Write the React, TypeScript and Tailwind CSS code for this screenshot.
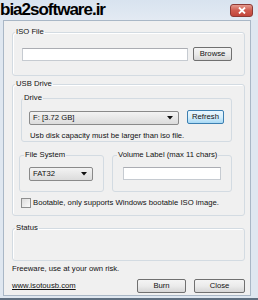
import React from 'react'

const font = { fontFamily: '"Liberation Sans", Arial, sans-serif' }

function WinButton({ label, className = '' }: { label: string; className?: string }) {
  return (
    <button
      type="button"
      className={`h-[14px] rounded-[2px] border border-[#707070] bg-gradient-to-b from-[#f4f4f4] via-[#ebebeb] to-[#d6d6d6] text-[7.7px] leading-[12px] text-[#111] text-center ${className}`}
    >
      {label}
    </button>
  )
}

function Combo({ value, className = '' }: { value: string; className?: string }) {
  return (
    <div
      className={`h-[14px] rounded-[2px] border border-[#8a8a8a] bg-gradient-to-b from-[#f3f3f3] to-[#dcdcdc] flex items-center justify-between pl-[3px] pr-[5px] ${className}`}
    >
      <span className="text-[7.7px] leading-[10px] text-[#111]">{value}</span>
      <svg width="6" height="4" viewBox="0 0 6 4">
        <path d="M0 0 L6 0 L3 3.5 Z" fill="#111" />
      </svg>
    </div>
  )
}

function Group({ label, className = '', children }: { label: string; className?: string; children?: React.ReactNode }) {
  return (
    <fieldset className={`border border-[#d3dbe2] rounded-[3px] shadow-[inset_1px_1px_0_#fff] ${className}`}>
      <legend className="ml-[2px] px-[1px] text-[7.7px] leading-[10px] text-[#111]">{label}</legend>
      {children}
    </fieldset>
  )
}

export default function App() {
  return (
    <div style={font} className="w-[258px] h-[300px] flex flex-col bg-[#dfe7f0] border-b-2 border-[#5f6f80] overflow-hidden">
      {/* title bar */}
      <div className="h-[20px] flex items-start justify-between bg-gradient-to-b from-[#d8e3ef] to-[#e3eaf3]">
        <span className="mt-[0px] text-[17px] leading-[20px] font-bold tracking-[-1px] text-black">bia2software.ir</span>
        <div className="mt-[4px] mr-[5px] w-[23px] h-[13px] rounded-[3px] border border-[#8d3a35] bg-gradient-to-b from-[#e49a8f] via-[#cf5b4f] to-[#c2443a] flex items-center justify-center">
          <svg width="8" height="7" viewBox="0 0 8 7">
            <path d="M1 0.5 L7 6.5 M7 0.5 L1 6.5" stroke="#fff" strokeWidth="1.8" />
          </svg>
        </div>
      </div>

      {/* client area */}
      <div className="ml-[3px] mr-[7px] h-[276px] border border-[#a9b7c6] bg-[#f0f0f0] pl-[8px] pr-[4px] flex flex-col text-[#111]">
        {/* ISO File */}
        <Group label="ISO File" className="mt-[6px] h-[49px] w-[233px]">
          <div className="mt-[10px] ml-[9px] flex items-start">
            <input
              type="text"
              className="mt-[1px] w-[166px] h-[13px] bg-white border border-[#c6cbd1] border-t-[#abadb3] outline-none"
            />
            <WinButton label="Browse" className="ml-[5px] w-[39px]" />
          </div>
        </Group>

        {/* USB Drive */}
        <Group label="USB Drive" className="mt-[3px] h-[137px] w-[233px]">
          <fieldset className="mt-[4px] ml-[8px] w-[211px] h-[49px] border border-[#d3dbe2] rounded-[3px]">
            <legend className="ml-[1px] px-[1px] text-[7.7px] leading-[10px]">Drive</legend>
            <div className="mt-[7px] ml-[7px] flex items-start">
              <Combo value="F: [3.72 GB]" className="mt-[1px] w-[150px] h-[13px]" />
              <button
                type="button"
                className="ml-[8px] w-[37px] h-[14px] rounded-[2px] border border-[#3c7fb1] bg-gradient-to-b from-[#eaf6fd] via-[#d9f0fc] to-[#a7d9f5] text-[7.7px] leading-[12px] text-[#111]"
              >
                Refresh
              </button>
            </div>
            <p className="mt-[6px] ml-[8px] text-[7.7px] leading-[10px]">Usb disk capacity must be larger than iso file.</p>
          </fieldset>

          <div className="mt-[8px] ml-[6px] flex gap-[8px]">
            <fieldset className="w-[85px] h-[42px] border border-[#d3dbe2] rounded-[3px]">
              <legend className="ml-[4px] px-[1px] text-[7.7px] leading-[10px]">File System</legend>
              <Combo value="FAT32" className="mt-[7px] ml-[9px] w-[64px]" />
            </fieldset>
            <fieldset className="w-[120px] h-[42px] border border-[#d3dbe2] rounded-[3px]">
              <legend className="ml-[4px] px-[1px] text-[7.7px] leading-[10px]">Volume Label (max 11 chars)</legend>
              <input
                type="text"
                className="mt-[7px] ml-[10px] w-[98px] h-[13px] bg-white border border-[#c6cbd1] border-t-[#abadb3] outline-none block"
              />
            </fieldset>
          </div>

          <label className="mt-[6px] ml-[8px] flex items-center gap-[2px]">
            <span className="w-[10px] h-[10px] border border-[#8e8f8f] bg-gradient-to-br from-[#dcdcdc] to-[#fbfbfb]" />
            <span className="text-[7.7px] leading-[10px]">Bootable, only supports Windows bootable ISO image.</span>
          </label>
        </Group>

        {/* Status */}
        <Group label="Status" className="mt-[7px] h-[38px] w-[233px]" />

        <p className="mt-[3px] text-[7.7px] leading-[10px]">Freeware, use at your own risk.</p>

        <div className="mt-[5px] w-[233px] flex items-center">
          <span className="text-[7.7px] leading-[10px] underline text-[#111]">www.isotousb.com</span>
          <div className="ml-auto flex gap-[8px]">
            <WinButton label="Burn" className="w-[49px] h-[13px] leading-[11px]" />
            <WinButton label="Close" className="w-[51px] h-[13px] leading-[11px]" />
          </div>
        </div>
      </div>
    </div>
  )
}
